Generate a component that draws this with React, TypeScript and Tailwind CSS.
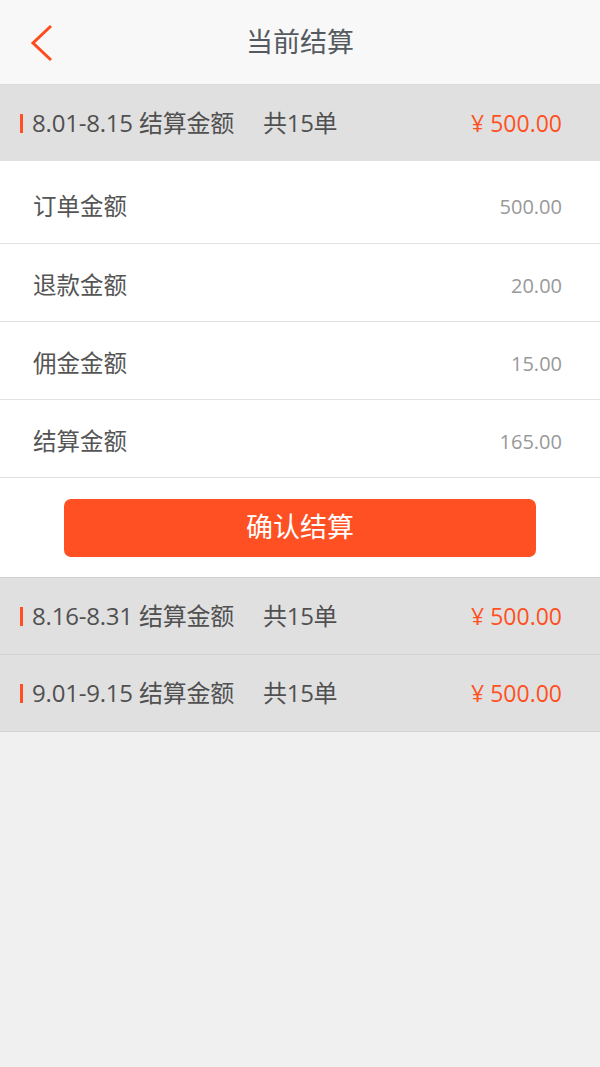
const FONT = { fontFamily: '"Open Sans", "Noto Sans CJK SC", sans-serif' };

type Period = { range: string; count: number; amount: string };

const PERIODS: Period[] = [
  { range: "8.01-8.15", count: 15, amount: "500.00" },
  { range: "8.16-8.31", count: 15, amount: "500.00" },
  { range: "9.01-9.15", count: 15, amount: "500.00" },
];

const DETAILS = [
  { label: "订单金额", value: "500.00" },
  { label: "退款金额", value: "20.00" },
  { label: "佣金金额", value: "15.00" },
  { label: "结算金额", value: "165.00" },
];

function PeriodRow({ p, last }: { p: Period; last?: boolean }) {
  return (
    <div
      className={`flex items-center h-[77px] bg-[#e0e0e0] pl-[20px] pr-[38px] ${
        last ? "border-b border-[#d2d2d2]" : "border-b border-[#d2d2d2]"
      }`}
    >
      <span className="w-[3px] h-[19px] bg-[#ff5022] mr-[9px]" />
      <span className="text-[24px] text-[#505050] w-[231px] tracking-[-0.2px]">{p.range} 结算金额</span>
      <span className="text-[24px] text-[#505050] tracking-[-0.3px]">共{p.count}单</span>
      <span className="ml-auto text-[23px] text-[#ff5022]">¥ {p.amount}</span>
    </div>
  );
}

export default function App() {
  const [current, ...rest] = PERIODS;
  return (
    <div className="min-h-[1067px] bg-[#f0f0f0] flex flex-col" style={FONT}>
      {/* Header */}
      <div className="relative flex items-center justify-center h-[85px] bg-[#f8f8f8] border-b border-[#dcdcdc]">
        <svg className="absolute left-[28px] top-[23px]" width="28" height="40" viewBox="0 0 28 40">
          <path d="M23 3 L5 20 L23 37" fill="none" stroke="#ff4a1c" strokeWidth="3" />
        </svg>
        <h1 className="text-[27px] text-[#555a60]">当前结算</h1>
      </div>

      {/* Current period */}
      <div className="flex items-center h-[76px] bg-[#e0e0e0] pl-[20px] pr-[38px]">
        <span className="w-[3px] h-[19px] bg-[#ff5022] mr-[9px]" />
        <span className="text-[24px] text-[#505050] w-[231px] tracking-[-0.2px]">{current.range} 结算金额</span>
        <span className="text-[24px] text-[#505050] tracking-[-0.3px]">共{current.count}单</span>
        <span className="ml-auto text-[23px] text-[#ff5022]">¥ {current.amount}</span>
      </div>

      <div className="bg-white">
        {DETAILS.map((d, i) => (
          <div
            key={d.label}
            className={`flex items-center justify-between pl-[33px] pr-[38px] pt-[6px] border-b border-[#e2e2e2] ${
              i === 0 ? "h-[83px] pt-[10px]" : "h-[78px]"
            }`}
          >
            <span className="text-[23.5px] text-[#555]">{d.label}</span>
            <span className="text-[20px] text-[#999]">{d.value}</span>
          </div>
        ))}
        <div className="flex items-center justify-center h-[100px] border-b border-[#d2d2d2]">
          <button className="w-[472px] h-[58px] rounded-[7px] bg-[#ff5023] text-white text-[27px]">
            确认结算
          </button>
        </div>
      </div>

      {rest.map((p, i) => (
        <PeriodRow key={p.range} p={p} last={i === rest.length - 1} />
      ))}
    </div>
  );
}
